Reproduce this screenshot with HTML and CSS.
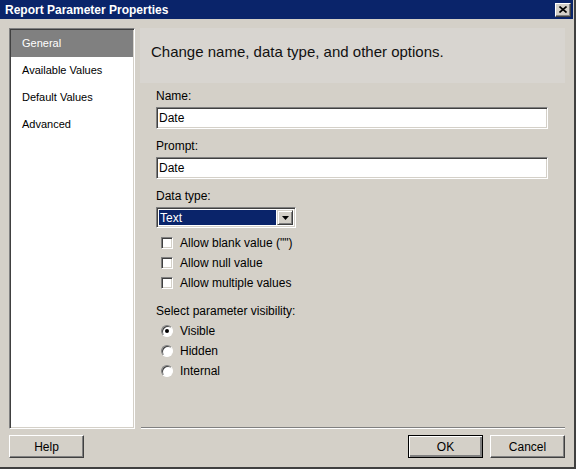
FILE: index.html
```html
<!DOCTYPE html>
<html lang="en">
<head>
  <meta charset="UTF-8" />
  <title>Report Parameter Properties</title>
  <link rel="stylesheet" href="styles.css">
</head>
<body>

  <div class="window">
    <!-- Title bar -->
    <div class="titlebar">
      <span class="title">Report Parameter Properties</span>
      <button class="close-btn">
        <svg width="8" height="7" viewBox="0 0 8 7"><path d="M0.5 0.5 L7.5 6.5 M7.5 0.5 L0.5 6.5" stroke="#000" stroke-width="1.6" fill="none"/></svg>
      </button>
    </div>

    <div class="main">
      <!-- Page list -->
      <ul class="nav">
        <li class="nav-item active">General</li>
        <li class="nav-item">Available Values</li>
        <li class="nav-item">Default Values</li>
        <li class="nav-item">Advanced</li>
      </ul>

      <div class="content">
        <div class="page-header">
          <h1>Change name, data type, and other options.</h1>
        </div>

        <div class="form">
          <div class="field">
            <label>Name:</label>
            <div class="textbox">Date</div>
          </div>
          <div class="field">
            <label>Prompt:</label>
            <div class="textbox">Date</div>
          </div>
          <div class="field">
            <label>Data type:</label>
            <div class="combo">
              <span class="combo-value">Text</span>
              <span class="combo-btn">
                <svg width="7" height="4" viewBox="0 0 7 4"><polygon points="0,0 7,0 3.5,4" fill="#000"/></svg>
              </span>
            </div>
          </div>

          <div class="checks">
            <div class="check-row"><span class="checkbox"></span>Allow blank value ("")</div>
            <div class="check-row"><span class="checkbox"></span>Allow null value</div>
            <div class="check-row"><span class="checkbox"></span>Allow multiple values</div>
          </div>

          <label class="group-label">Select parameter visibility:</label>
          <div class="radios">
            <div class="radio-row"><span class="radio checked"></span>Visible</div>
            <div class="radio-row"><span class="radio"></span>Hidden</div>
            <div class="radio-row"><span class="radio"></span>Internal</div>
          </div>
        </div>

        <div class="separator"></div>
      </div>
    </div>

    <!-- Buttons -->
    <div class="footer">
      <button class="btn">Help</button>
      <div class="spacer"></div>
      <button class="btn default">OK</button>
      <button class="btn">Cancel</button>
    </div>
  </div>

</body>
</html>
```

FILE: styles.css
```css
* {
  box-sizing: border-box;
}
body {
  margin: 0;
  font-family: 'Liberation Sans', Arial, sans-serif;
  font-size: 12px;
  color: #000;
  background: #d4d0c8;
}
.window {
  width: 576px;
  height: 469px;
  background: #d4d0c8;
  border-right: 2px solid #404040;
  border-bottom: 2px solid #404040;
  display: flex;
  flex-direction: column;
}
.titlebar {
  height: 19px;
  margin-right: 1px;
  background: #0a246a;
  color: #fff;
  display: flex;
  align-items: center;
  justify-content: space-between;
  padding: 0 2px 0 5px;
}
.title {
  font-weight: bold;
  font-size: 12px;
}
.close-btn {
  width: 16px;
  height: 14px;
  padding: 0;
  background: #d4d0c8;
  border: 1px solid;
  border-color: #fff #404040 #404040 #fff;
  box-shadow: inset -1px -1px 0 #808080;
  display: flex;
  align-items: center;
  justify-content: center;
}
.main {
  display: flex;
  gap: 5px;
  padding: 9px 9px 0 9px;
}
/* Left page list */
.nav {
  list-style: none;
  margin: 0;
  width: 126px;
  height: 401px;
  background: #fff;
  border: 1px solid;
  border-color: #808080 #fff #fff #808080;
  box-shadow: inset 1px 1px 0 #404040, inset -1px -1px 0 #d4d0c8;
  padding: 1px 1px 0 1px;
  font-size: 11px;
}
.nav-item {
  height: 27px;
  line-height: 27px;
  padding-left: 11px;
}
.nav-item.active {
  background: #808080;
  color: #fff;
}
/* Right side */
.content {
  flex: 1;
  display: flex;
  flex-direction: column;
}
.page-header {
  height: 55px;
  background: #d8d5d0;
  padding: 15px 0 0 11px;
}
.page-header h1 {
  margin: 0;
  font-weight: normal;
  font-size: 15px;
  line-height: 18px;
  color: #111;
}
.form {
  padding: 6px 17px 0 16px;
}
.field {
  margin-bottom: 10px;
}
.field label, .group-label {
  display: block;
  line-height: 14px;
  margin-bottom: 4px;
}
.textbox {
  height: 22px;
  background: #fff;
  border: 1px solid;
  border-color: #808080 #fff #fff #808080;
  box-shadow: inset 1px 1px 0 #404040, inset -1px -1px 0 #d4d0c8;
  padding: 3px 0 0 2px;
  line-height: 14px;
}
.combo {
  width: 140px;
  height: 21px;
  display: flex;
  background: #fff;
  border: 1px solid;
  border-color: #808080 #fff #fff #808080;
  box-shadow: inset 1px 1px 0 #404040, inset -1px -1px 0 #d4d0c8;
  padding: 2px;
}
.combo-value {
  flex: 1;
  background: #0a246a;
  color: #fff;
  padding-left: 1px;
  line-height: 16px;
  margin: 0 1px 0 0;
}
.combo-btn {
  width: 16px;
  background: #d4d0c8;
  border: 1px solid;
  border-color: #d4d0c8 #404040 #404040 #d4d0c8;
  box-shadow: inset 1px 1px 0 #fff, inset -1px -1px 0 #808080;
  display: flex;
  align-items: center;
  justify-content: center;
}
.checks {
  margin-top: -5px;
}
.check-row, .radio-row {
  height: 20px;
  display: flex;
  align-items: center;
  padding-left: 5px;
}
.checkbox {
  width: 12px;
  height: 12px;
  background: #fff;
  border: 1px solid;
  border-color: #808080 #fff #fff #808080;
  box-shadow: inset 1px 1px 0 #404040, inset -1px -1px 0 #d4d0c8;
  margin-right: 7px;
}
.group-label {
  margin-top: 11px;
  margin-bottom: 3px;
}
.radio {
  width: 12px;
  height: 12px;
  border-radius: 50%;
  background: #fff;
  border: 1px solid;
  border-color: #808080 #fff #fff #808080;
  box-shadow: inset 1px 1px 0 #404040;
  margin-right: 7px;
  display: flex;
  align-items: center;
  justify-content: center;
}
.radio.checked::after {
  content: "";
  width: 4px;
  height: 4px;
  border-radius: 50%;
  background: #000;
}
.separator {
  margin-top: auto;
  margin-left: 1px;
  border-top: 1px solid #808080;
  border-bottom: 1px solid #fff;
}
/* Bottom buttons */
.footer {
  display: flex;
  gap: 7px;
  padding: 6px 9px 0 9px;
}
.spacer {
  flex: 1;
}
.btn {
  width: 75px;
  height: 23px;
  font-family: 'Liberation Sans', Arial, sans-serif;
  font-size: 12px;
  color: #000;
  background: #d4d0c8;
  border: 1px solid;
  border-color: #fff #404040 #404040 #fff;
  box-shadow: inset -1px -1px 0 #808080;
  padding: 0;
}
.btn.default {
  border: 1px solid #000;
  box-shadow: inset 1px 1px 0 #fff, inset -2px -2px 0 #808080, inset -1px -1px 0 #404040;
}
```
